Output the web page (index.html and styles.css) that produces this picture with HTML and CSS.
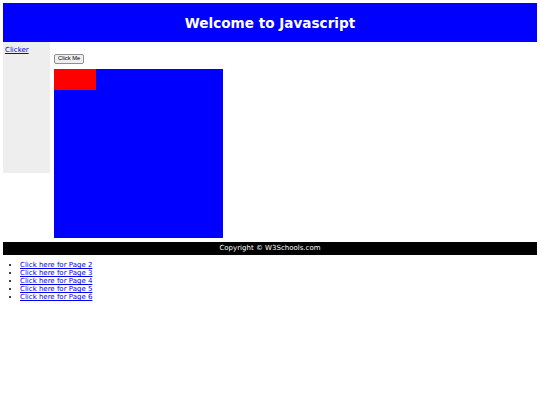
FILE: index.html
```html
<!DOCTYPE html>
<html>
<head>
<meta charset="utf-8">
<title>Welcome to Javascript</title>
<link rel="stylesheet" href="styles.css">
</head>
<body>
<header class="site-header">
  <h1 class="site-title">Welcome to Javascript</h1>
</header>
<div class="page">
  <nav class="sidebar">
    <a href="#" class="side-link">Clicker</a>
  </nav>
  <section class="content">
    <p class="btn-row"><button class="btn">Click Me</button></p>
    <div class="board">
      <div class="block"></div>
    </div>
  </section>
</div>
<footer class="site-footer">Copyright © W3Schools.com</footer>
<ul class="pages">
  <li><a href="#">Click here for Page 2</a></li>
  <li><a href="#">Click here for Page 3</a></li>
  <li><a href="#">Click here for Page 4</a></li>
  <li><a href="#">Click here for Page 5</a></li>
  <li><a href="#">Click here for Page 6</a></li>
</ul>
</body>
</html>
```
FILE: styles.css
```css
html, body {
  background: #fff;
}
body {
  margin: 3px;
  font-family: "DejaVu Sans", Verdana, sans-serif;
  font-size: 7px;
  line-height: 8px;
  color: #000;
}
a {
  color: #0000ee;
}
.site-header {
  background: #0000ff;
  height: 39px;
  display: flex;
  align-items: center;
  justify-content: center;
}
.site-title {
  margin: 0;
  color: #fff;
  font-size: 13.6px;
  line-height: 16px;
  font-weight: bold;
}
.page {
  display: flex;
  align-items: flex-start;
}
.sidebar {
  width: 44px;
  height: 126px;
  padding: 4px 1px 1px 2px;
  background: #eeeeee;
  flex: none;
}
.content {
  padding: 4px;
}
.btn-row {
  margin: 8px 0 5px;
  line-height: 10px;
  height: 10px;
}
.btn {
  font-family: "Liberation Sans", Arial, sans-serif;
  font-size: 5.8px;
  line-height: 7px;
  height: 9.5px;
  padding: 0 3px;
  margin: 0;
  background: #efefef;
  border: 1px solid #8f8f8f;
  border-radius: 2px;
  color: #000;
  vertical-align: top;
}
.board {
  width: 169px;
  height: 169px;
  background: #0000ff;
}
.block {
  width: 42px;
  height: 21px;
  background: #ff0000;
}
.site-footer {
  background: #000;
  color: #fff;
  text-align: center;
  height: 12.5px;
  line-height: 12.5px;
}
.pages {
  margin: 6.5px 0;
  padding-left: 17px;
}
```
